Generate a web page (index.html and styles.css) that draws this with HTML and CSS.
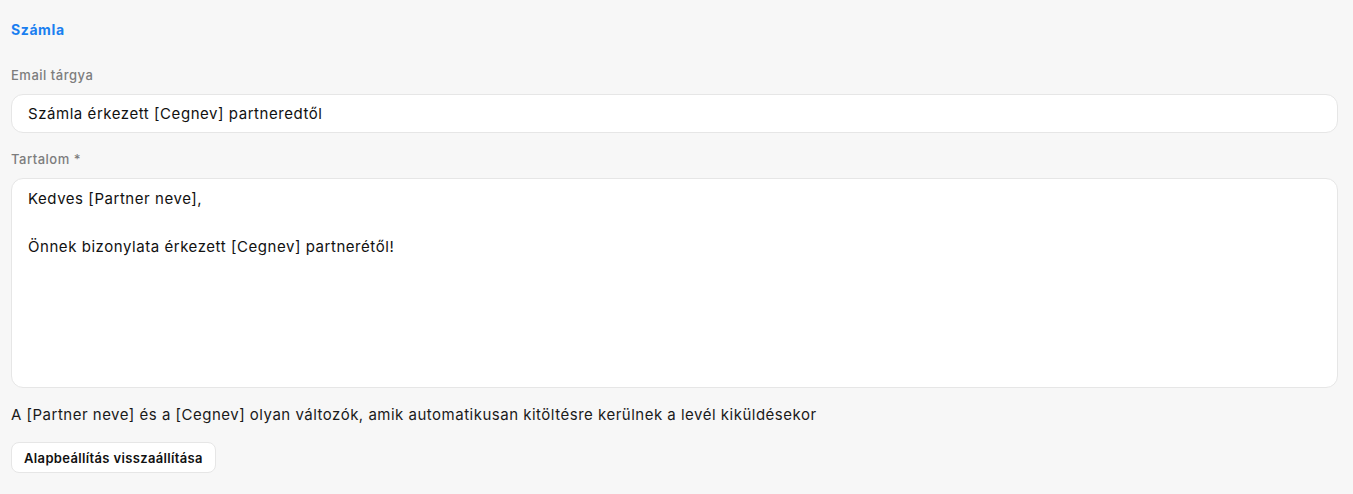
FILE: index.html
```html
<!DOCTYPE html>
<html lang="hu">
<head>
    <meta charset="UTF-8">
    <meta name="viewport" content="width=device-width, initial-scale=1.0">
    <title>Számla email</title>
    <link rel="stylesheet" href="styles.css">
</head>
<body>

<div class="section">
    <h2 class="section-title">Számla</h2>

    <div class="field">
        <label for="subject">Email tárgya</label>
        <div class="input" id="subject">Számla érkezett [Cegnev] partneredtől</div>
    </div>

    <div class="field">
        <label for="content">Tartalom <span class="req">*</span></label>
        <div class="textarea" id="content">
            <p>Kedves [Partner neve],</p>
            <p>&nbsp;</p>
            <p>Önnek bizonylata érkezett [Cegnev] partnerétől!</p>
        </div>
    </div>

    <p class="hint">A [Partner neve] és a [Cegnev] olyan változók, amik automatikusan kitöltésre kerülnek a levél kiküldésekor</p>

    <button type="button" class="reset-btn">Alapbeállítás visszaállítása</button>
</div>

</body>
</html>
```

FILE: styles.css
```css
body {
    font-family: Inter, "Liberation Sans", sans-serif;
    margin: 0;
    padding: 0;
    background-color: #f7f7f7;
    color: #1a1a1a;
}
.section {
    padding: 20px 15px 18px 11px;
}
.section-title {
    margin: 0 0 26px 0;
    font-size: 14px;
    font-weight: 700;
    color: #1a7ff0;
    line-height: 20px;
    letter-spacing: 0.6px;
}
.field {
    margin-bottom: 17px;
}
.field label {
    display: block;
    font-size: 13px;
    font-weight: 500;
    color: #7d7d7d;
    line-height: 18px;
    margin-bottom: 10px;
    letter-spacing: 0.5px;
}
.req {
    color: #7d7d7d;
}
.input, .textarea {
    background-color: #ffffff;
    border: 1px solid #e6e6e6;
    border-radius: 12px;
    font-size: 15px;
    line-height: 20px;
    color: #111;
    letter-spacing: 0.55px;
}
.input {
    height: 37px;
    line-height: 37px;
    padding: 0 16px;
}
.textarea {
    height: 188px;
    padding: 10px 16px;
}
.textarea p {
    margin: 0 0 4px 0;
    line-height: 20px;
}
.hint {
    margin: 2px 0 17px 0;
    font-size: 15px;
    line-height: 20px;
    color: #1a1a1a;
    letter-spacing: 0.5px;
}
.reset-btn {
    font-family: inherit;
    font-size: 13px;
    font-weight: 600;
    color: #111;
    background-color: #ffffff;
    border: 1px solid #e6e6e6;
    border-radius: 8px;
    height: 31px;
    padding: 0 12px;
    letter-spacing: 0.35px;
    cursor: pointer;
}
```
